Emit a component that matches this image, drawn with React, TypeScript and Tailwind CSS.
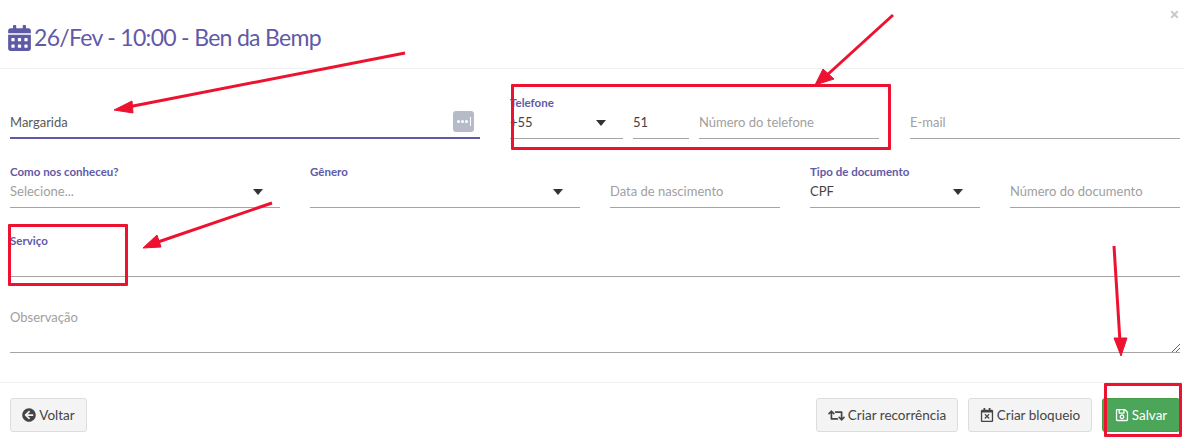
import { FaCalendarAlt, FaArrowCircleLeft, FaRetweet, FaRegCalendarTimes, FaRegSave, FaTimes } from 'react-icons/fa';

const font = { fontFamily: 'Lato' };

function Field({ label, value, placeholder, caret, className }: { label?: string; value?: string; placeholder?: string; caret?: boolean; className?: string }) {
  return (
    <div className={className}>
      <div className="h-[17px] text-[11.5px] leading-[17px] font-bold text-[#5f5aa8] whitespace-nowrap">{label}</div>
      <div className="relative h-[28px] border-b border-[#a5a5a5] text-[13px] leading-[22px]">
        {value && <span className="text-[#444]">{value}</span>}
        {placeholder && <span className="text-[#a0a0a0]">{placeholder}</span>}
        {caret && <span className="absolute right-[17px] top-[9px] h-0 w-0 border-x-[5.5px] border-t-[6px] border-x-transparent border-t-[#333]" />}
      </div>
    </div>
  );
}

function Btn({ icon, text, className }: { icon: React.ReactNode; text: string; className: string }) {
  return (
    <button className={`flex h-[34px] items-center gap-[3px] rounded-[3px] border text-[13.5px] ${className}`}>
      {icon}
      {text}
    </button>
  );
}

export default function App() {
  return (
    <div className="relative h-[445px] w-[1184px] overflow-hidden bg-white" style={font}>
      {/* header */}
      <div className="relative flex h-[69px] items-center gap-[3px] border-b border-[#f0f0f0] pl-[8px] pt-[7px] text-[#5f5aa8]">
        <FaCalendarAlt className="h-[26px] w-[23px]" />
        <h4 className="text-[23px] tracking-[-0.7px] whitespace-nowrap">26/Fev - 10:00 - Ben da Bemp</h4>
        <FaTimes className="absolute right-[4px] top-[9px] text-[11px] text-[#c9c9c9]" />
      </div>

      {/* form */}
      <div className="grid h-[313px] grid-cols-12 content-start gap-x-[30px] pl-[10px] pr-[4px] pt-[25px]">
        <div className="relative col-span-5">
          <div className="h-[17px]" />
          <div className="h-[28px] border-b-2 border-[#5f5aa8] text-[13px] leading-[22px] text-[#5a5a5a]">Margarida</div>
          <div className="absolute right-[6px] top-[17px] flex h-[21px] w-[21px] items-center justify-center gap-[1px] rounded-[3px] bg-[#b5bcc7]">
            <span className="h-[3px] w-[3px] rounded-full bg-white" />
            <span className="h-[3px] w-[3px] rounded-full bg-white" />
            <span className="h-[3px] w-[3px] rounded-full bg-white" />
            <span className="ml-[1px] h-[9px] w-[1px] bg-white" />
          </div>
        </div>
        <div className="col-span-4 flex gap-[10px]">
          <Field label="Telefone" value="+55" caret className="w-[113px]" />
          <Field label=" " value="51" className="w-[56px]" />
          <Field label=" " placeholder="Número do telefone" className="w-[180px]" />
        </div>
        <Field label=" " placeholder="E-mail" className="col-span-3" />

        <Field label="Como nos conheceu?" placeholder="Selecione..." caret className="col-span-3 mt-[24px]" />
        <Field label="Gênero" caret className="col-span-3 mt-[24px]" />
        <Field label=" " placeholder="Data de nascimento" className="col-span-2 mt-[24px]" />
        <Field label="Tipo de documento" value="CPF" caret className="col-span-2 mt-[24px]" />
        <Field label=" " placeholder="Número do documento" className="col-span-2 mt-[24px]" />

        <Field label="Serviço" className="col-span-12 mt-[24px]" />

        <div className="relative col-span-12 mt-[30px] h-[46px] border-b border-[#a5a5a5] text-[13px] leading-[20px] text-[#a0a0a0]">
          Observação
          <svg className="absolute bottom-0 right-0" width="9" height="9" viewBox="0 0 9 9" stroke="#666" strokeWidth="1">
            <path d="M1 9 9 1M5 9 9 5" />
          </svg>
        </div>
      </div>

      {/* footer */}
      <div className="flex h-[63px] items-start justify-between border-t border-[#f0f0f0] pl-[10px] pr-[4px] pt-[15px]">
        <Btn icon={<FaArrowCircleLeft className="text-[14px]" />} text="Voltar" className="w-[77px] justify-center border-[#ddd] bg-[#f4f4f4] text-[#444]" />
        <div className="flex gap-[10px]">
          <Btn icon={<FaRetweet className="text-[17px]" />} text="Criar recorrência" className="w-[142px] justify-center border-[#ddd] bg-[#f4f4f4] text-[#444]" />
          <Btn icon={<FaRegCalendarTimes className="text-[14px]" />} text="Criar bloqueio" className="w-[124px] justify-center border-[#ddd] bg-[#f4f4f4] text-[#444]" />
          <Btn icon={<FaRegSave className="text-[14px]" />} text="Salvar" className="w-[78px] justify-center border-[#449d44] bg-[#4ca65a] text-white" />
        </div>
      </div>

      {/* red annotations drawn over the form */}
      <div className="absolute left-[511px] top-[84px] h-[66px] w-[380px] rounded-[1px] border-[3px] border-[#ed1230]" />
      <div className="absolute left-[8px] top-[224px] h-[62px] w-[120px] rounded-[1px] border-[3px] border-[#ed1230]" />
      <div className="absolute left-[1104px] top-[383px] h-[54px] w-[78px] rounded-[1px] border-[3px] border-[#ed1230]" />
      <svg className="absolute left-0 top-0" width="1184" height="445" fill="#ed1230" stroke="#ed1230">
        <path d="M405 53 128 107" strokeWidth="3" fill="none" />
        <path d="M114 110 132 101 133 113Z" />
        <path d="M893 15 826 76" strokeWidth="3" fill="none" />
        <path d="M815 85 823 69 834 79Z" />
        <path d="M272 203 155 243" strokeWidth="3" fill="none" />
        <path d="M143 248 157 235 161 247Z" />
        <path d="M1114 246 1120 342" strokeWidth="3" fill="none" />
        <path d="M1121 356 1114 338 1127 338Z" />
      </svg>
    </div>
  );
}
